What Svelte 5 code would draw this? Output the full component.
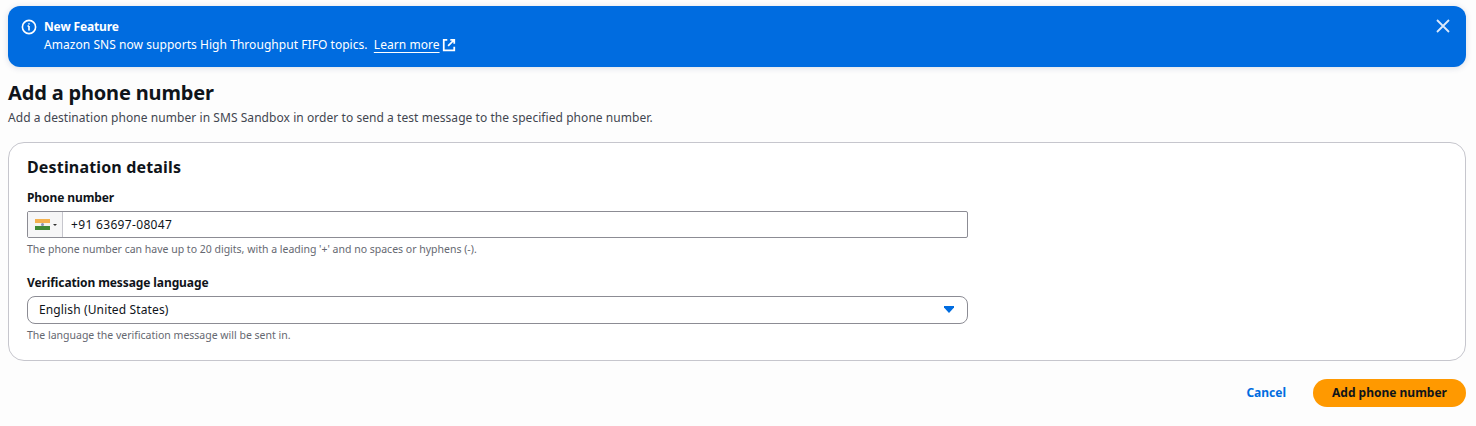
<script>
	let phone = '+91 63697-08047';
</script>

<div class="page">
	<div class="flash">
		<svg class="info" viewBox="0 0 16 16" width="16" height="16" aria-hidden="true">
			<circle cx="8" cy="8" r="6.6" />
			<path d="M8 7v4.5M6.5 7H8" />
			<path d="M8 4.2v1.4" />
		</svg>
		<div class="flash-text">
			<div class="flash-title">New Feature</div>
			<div class="flash-body">
				Amazon SNS now supports High Throughput FIFO topics.
				<a href="#learn" class="learn">Learn more</a>
				<svg class="ext" viewBox="0 0 16 16" width="14" height="14" aria-hidden="true">
					<path d="M9.5 2H14v4.5M14 2 7 9M6 2H2v12h12v-4" />
				</svg>
			</div>
		</div>
		<svg class="close" viewBox="0 0 16 16" width="16" height="16" aria-hidden="true">
			<path d="m2 2 12 12M14 2 2 14" />
		</svg>
	</div>

	<h1>Add a phone number</h1>
	<p class="desc">Add a destination phone number in SMS Sandbox in order to send a test message to the specified phone number.</p>

	<section class="card">
		<h2>Destination details</h2>

		<div class="field first">
			<div class="label">Phone number</div>
			<div class="phone">
				<div class="flag-box">
					<span class="flag"><i class="saffron"></i><i class="white"><b></b></i><i class="green"></i></span>
					<span class="caret"></span>
				</div>
				<input class="phone-input" value={phone} />
			</div>
			<div class="hint">The phone number can have up to 20 digits, with a leading '+' and no spaces or hyphens (-).</div>
		</div>

		<div class="field">
			<div class="label">Verification message language</div>
			<div class="select">
				<span>English (United States)</span>
				<svg viewBox="0 0 16 16" width="16" height="16" aria-hidden="true">
					<path class="tri" d="M4 4h10v1.5l-5 5.5-5-5.5z" />
				</svg>
			</div>
			<div class="hint">The language the verification message will be sent in.</div>
		</div>
	</section>

	<div class="actions">
		<a href="#cancel" class="cancel">Cancel</a>
		<button class="primary">Add phone number</button>
	</div>
</div>

<style>
	:global(body) {
		margin: 0;
		background: #fdfdfd;
	}

	.page {
		font-family: "Noto Sans", "Open Sans", sans-serif;
		font-size: 12px;
		line-height: 16px;
		color: #0f141a;
		padding: 6px 10px 0 8px;
	}

	.flash {
		display: flex;
		align-items: flex-start;
		background: #006ce0;
		color: #fff;
		border-radius: 12px;
		height: 61px;
		box-sizing: border-box;
		padding: 12px 15px 0 14px;
		box-shadow: 0 1px 6px rgba(0, 40, 100, 0.15);
	}

	.info {
		margin: 1px 7px 0 -1px;
		flex: none;
		fill: none;
		stroke: #fff;
		stroke-width: 1.6;
	}

	.flash-text {
		flex: 1;
		line-height: 18px;
	}

	.flash-title {
		font-weight: 700;
		letter-spacing: -0.15px;
	}

	.flash-body {
		letter-spacing: 0.05px;
	}

	.learn {
		color: #fff;
		text-decoration: underline;
		text-underline-offset: 3px;
		margin-left: 3px;
	}

	.ext {
		vertical-align: -3px;
		margin-left: -1px;
		fill: none;
		stroke: #fff;
		stroke-width: 2;
	}

	.close {
		fill: none;
		stroke: #dbe9fb;
		stroke-width: 1.8;
	}

	h1 {
		font-size: 20px;
		line-height: 24px;
		font-weight: 700;
		letter-spacing: -0.17px;
		margin: 14px 0 0;
	}

	.desc {
		margin: 5px 0 0;
		color: #424650;
		letter-spacing: 0.057px;
	}

	.card {
		margin-top: 16px;
		background: #fff;
		border: 1px solid #c6c6cd;
		border-radius: 16px;
		padding: 13px 18px 18px;
		height: 219px;
		box-sizing: border-box;
	}

	h2 {
		font-size: 16px;
		line-height: 22px;
		font-weight: 700;
		letter-spacing: 0.16px;
		margin: 0;
	}

	.field {
		margin-top: 19px;
	}

	.field.first {
		margin-top: 12px;
	}

	.label {
		font-weight: 700;
		line-height: 16px;
		letter-spacing: -0.1px;
		margin-bottom: 5px;
	}

	.phone {
		display: flex;
		width: 941px;
		height: 27px;
		box-sizing: border-box;
		border: 1px solid #8c8c94;
		border-radius: 2px;
	}

	.flag-box {
		display: flex;
		align-items: center;
		width: 35px;
		flex: none;
		box-sizing: border-box;
		padding-left: 7px;
		background: #f6f6f7;
		border-right: 1px solid #c6c6cd;
	}

	.flag {
		display: flex;
		flex-direction: column;
		width: 15px;
		height: 11px;
	}

	.flag i {
		flex: 1;
		display: flex;
		align-items: center;
		justify-content: center;
	}

	.saffron {
		background: #f3b14f;
	}

	.white {
		background: #f4f4ee;
	}

	.white b {
		width: 3px;
		height: 3px;
		border-radius: 50%;
		background: #8a93b5;
	}

	.green {
		background: #3f8a35;
	}

	.caret {
		margin-left: 3px;
		border-left: 2px solid transparent;
		border-right: 2px solid transparent;
		border-top: 2px solid #333;
	}

	.phone-input {
		flex: 1;
		min-width: 0;
		border: 0;
		outline: 0;
		padding: 0 8px;
		background: transparent;
		font: inherit;
		color: inherit;
		letter-spacing: 0.33px;
	}

	.select {
		display: flex;
		align-items: center;
		justify-content: space-between;
		width: 941px;
		height: 28px;
		box-sizing: border-box;
		padding: 0 11px;
		border: 1px solid #8c8c94;
		border-radius: 8px;
		letter-spacing: 0.13px;
	}

	.tri {
		fill: #006ce0;
	}

	.hint {
		font-size: 10.5px;
		line-height: 14px;
		color: #656871;
		margin-top: 4px;
	}

	.actions {
		display: flex;
		justify-content: flex-end;
		align-items: center;
		gap: 27px;
		margin-top: 18px;
	}

	.cancel {
		color: #006ce0;
		font-weight: 700;
		text-decoration: none;
	}

	.primary {
		width: 153px;
		height: 28px;
		border: 0;
		border-radius: 14px;
		background: #ff9900;
		color: #0f141a;
		font: inherit;
		font-weight: 700;
	}
</style>
